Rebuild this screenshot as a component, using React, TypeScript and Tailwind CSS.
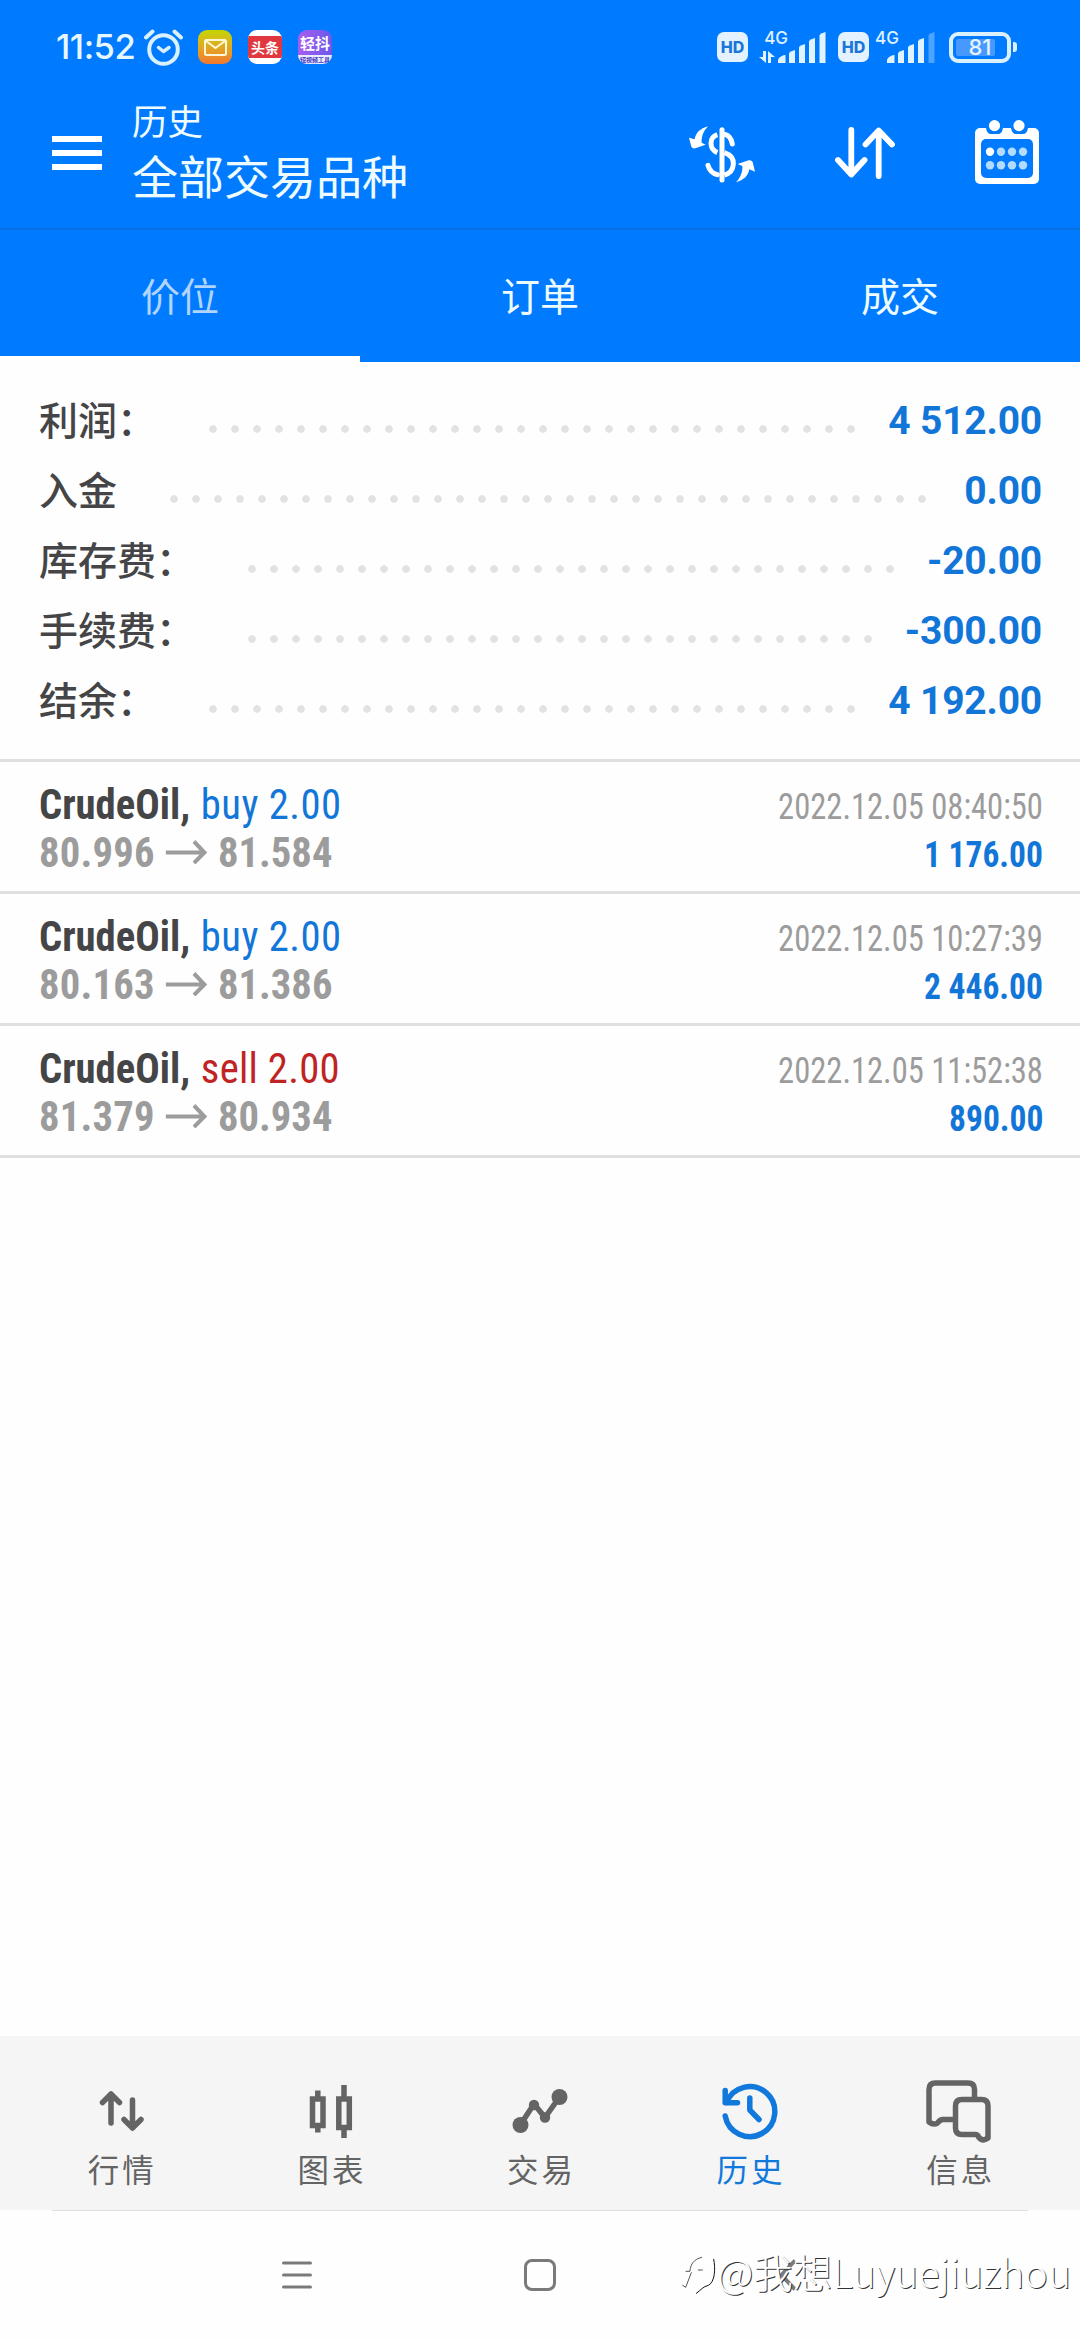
import type { ReactNode } from 'react'

interface SummaryRow {
  label: string
  value: string
  dots: number
}

interface Trade {
  side: 'buy' | 'sell'
  open: string
  close: string
  time: string
  profit: string
}

const summary: SummaryRow[] = [
  { label: '利润：', value: '4 512.00', dots: 30 },
  { label: '入金', value: '0.00', dots: 35 },
  { label: '库存费：', value: '-20.00', dots: 30 },
  { label: '手续费：', value: '-300.00', dots: 29 },
  { label: '结余：', value: '4 192.00', dots: 30 },
]

const trades: Trade[] = [
  { side: 'buy', open: '80.996', close: '81.584', time: '2022.12.05 08:40:50', profit: '1 176.00' },
  { side: 'buy', open: '80.163', close: '81.386', time: '2022.12.05 10:27:39', profit: '2 446.00' },
  { side: 'sell', open: '81.379', close: '80.934', time: '2022.12.05 11:52:38', profit: '890.00' },
]

const DOT_STEP = 22

function AlarmIcon() {
  return (
    <svg width="39" height="37" viewBox="0 0 39 37" fill="none" stroke="#d9f0ff" strokeLinecap="round">
      <circle cx="19.5" cy="20.5" r="14.3" strokeWidth="4" />
      <path d="M2 8.500L8.500 2.500M37 8.500L30.500 2.500" strokeWidth="4" />
      <path d="M14.500 18.500L19.500 22.500L25 18.500" strokeWidth="3.500" strokeLinejoin="round" />
    </svg>
  )
}

function HdBadge() {
  return (
    <div className="flex h-[30px] w-[31px] items-center justify-center rounded-[7px] bg-[#e4f2ff] text-[16px] font-extrabold leading-none text-[#1a76d8]">
      HD
    </div>
  )
}

function SignalBars({ weak }: { weak?: boolean }) {
  return (
    <svg width="48" height="31" viewBox="0 0 48 31" fill="#e0f3ff">
      <path d="M0 31v-3.500q3-4.500 7.500-4.500v8z" />
      <path d="M11 31v-10q2-2 6-3v13z" />
      <path d="M21 31v-16q2-2 6-3v19z" />
      <path d="M31 31v-22q2-2 6-3v25z" />
      <path d="M41.500 31v-28q2-2 6-3v31z" fill={weak ? '#4da3ff' : '#e0f3ff'} />
    </svg>
  )
}

function BatteryIcon() {
  return (
    <div className="flex items-center gap-[2px]">
      <div className="relative h-[31px] w-[62px] rounded-[9px] border-4 border-[#d9f0ff] p-[3px]">
        <div className="h-full w-[39px] rounded-[2px] bg-[#4799ff]" />
        <span className="absolute inset-0 flex items-center justify-center text-[22px] font-medium leading-none text-[#e4f5ff]">81</span>
      </div>
      <div className="h-[10px] w-1 rounded-r-[3px] bg-[#d9f0ff]" />
    </div>
  )
}

function StatusBar() {
  return (
    <div className="flex h-[94px] items-center pl-[56px] pr-[63px] font-['Inter',sans-serif]">
      <span className="w-[88px] whitespace-nowrap text-[34.5px] font-medium leading-none tracking-[-0.5px] text-[#e6f7ff]">11:52</span>
      <AlarmIcon />
      <div className="ml-[15px] flex size-[34px] items-center justify-center rounded-[9px] bg-linear-to-b from-[#c3d500] to-[#f2762c]">
        <svg width="23" height="17" viewBox="0 0 23 17" fill="none" stroke="#fff8d8" strokeWidth="2">
          <rect x="1" y="1" width="21" height="15" rx="1.500" />
          <path d="M2 2l9.500 7L21 2" />
        </svg>
      </div>
      <div className="ml-4 flex size-[34px] items-center overflow-hidden rounded-[9px] bg-white">
        <div className="flex h-[22px] w-full items-center justify-center whitespace-nowrap bg-[#e0383e] font-['Noto_Sans_CJK_SC',sans-serif] text-[14px] font-bold leading-none text-white">
          头条
        </div>
      </div>
      <div className="ml-4 flex size-[34px] flex-col items-center overflow-hidden rounded-[9px] bg-linear-to-r from-[#a95cf0] to-[#6a58ea] font-['Noto_Sans_CJK_SC',sans-serif] font-bold leading-none">
        <span className="flex h-[25px] items-center text-[15px] text-white">轻抖</span>
        <span className="flex h-[9px] w-full items-center justify-center whitespace-nowrap bg-[#e8ecff] text-[6px] text-[#4a3ac0]">短视频工具</span>
      </div>

      <div className="ml-auto flex items-center">
        <HdBadge />
        <div className="ml-[11px] flex h-[32px] w-[29px] flex-col justify-between">
          <span className="self-end text-[17px] font-medium leading-[14px] text-[#e0f3ff]">4G</span>
          <svg width="16" height="12" viewBox="0 0 16 12" fill="#e0f3ff">
            <path d="M4 0h3v12l-7-6h4zM9 12V0l7 6h-4v6z" />
          </svg>
        </div>
        <div className="-ml-[10px]">
          <SignalBars />
        </div>
        <div className="ml-3">
          <HdBadge />
        </div>
        <div className="ml-[6px] h-[32px] w-[21px]">
          <span className="block text-[17px] font-medium leading-[14px] text-[#e0f3ff]">4G</span>
        </div>
        <div className="-ml-[9px]">
          <SignalBars weak />
        </div>
        <div className="ml-[14px]">
          <BatteryIcon />
        </div>
      </div>
    </div>
  )
}

function CurrencyIcon() {
  return (
    <svg width="90" height="80" viewBox="0 0 270 240" fill="none" stroke="#fff" strokeWidth="15">
      <path d="M126 53V204" strokeLinecap="round" />
      <path d="M112 68Q93 74 93 94T112 122" />
      <path d="M133 67Q152 70 157 96" strokeLinecap="round" />
      <path d="M133 122Q162 132 160 157T133 189" />
      <path d="M84 160Q90 182 112 188" strokeLinecap="round" />
      <g fill="#fff" stroke="none">
        <path d="M84 43C60 50 48 62 44 82L27 77L34 104Q38 111 46 109L77 98L65 92C64 74 70 58 84 43z" />
        <path d="M168 211C192 204 204 192 208 172L225 179L218 150Q214 143 206 145L173 156L187 162C188 180 182 196 168 211z" />
      </g>
    </svg>
  )
}

function SortIcon() {
  return (
    <svg width="60" height="52" viewBox="0 0 60 52" fill="none" stroke="#fff" strokeWidth="5.800" strokeLinecap="round" strokeLinejoin="round">
      <path d="M16.300 3V46M3 33L16.300 47.500L29.500 33" />
      <path d="M43.700 49V5M30.500 17.500L43.700 3.500L57 17.500" />
    </svg>
  )
}

function CalendarIcon() {
  return (
    <svg width="64" height="64" viewBox="0 0 64 64" fill="#fff">
      <rect y="8" width="64" height="56" rx="5" />
      <rect x="6" y="19" width="52" height="39" rx="5" fill="#007bff" />
      <path d="M11 8h17q-1 6-5 6h-7q-4 0-5-6zM36 8h17q-1 6-5 6h-7q-4 0-5-6z" fill="#007bff" />
      <circle cx="19.500" cy="5.600" r="5.600" />
      <circle cx="44" cy="5.600" r="5.600" />
      <circle cx="15" cy="31.700" r="4.200" />
      <g fill="#b3daff">
        <circle cx="26" cy="31.700" r="4.200" />
        <circle cx="37" cy="31.700" r="4.200" />
        <circle cx="48" cy="31.700" r="4.200" />
        <circle cx="15" cy="45.300" r="4.200" />
        <circle cx="26" cy="45.300" r="4.200" />
        <circle cx="37" cy="45.300" r="4.200" />
        <circle cx="48" cy="45.300" r="4.200" />
      </g>
    </svg>
  )
}

function Header() {
  return (
    <header className="bg-[#007bff]">
      <StatusBar />
      <div className="flex h-[136px] items-start border-b-2 border-[#0871e4] pl-[52px] pr-[41px]">
        <div className="mt-[42px] flex w-[50px] flex-col gap-2">
          <div className="h-[6px] bg-white" />
          <div className="h-[6px] bg-white" />
          <div className="h-[6px] bg-white" />
        </div>
        <div className="ml-[30px] flex flex-col whitespace-nowrap text-[#effcff]">
          <span className="text-[35.5px] leading-[51px]">历史</span>
          <span className="text-[46px] leading-[59px]">全部交易品种</span>
        </div>
        <div className="ml-auto flex h-[116px] items-center">
          <CurrencyIcon />
          <div className="ml-[65px] pt-[2px]">
            <SortIcon />
          </div>
          <div className="ml-20">
            <CalendarIcon />
          </div>
        </div>
      </div>
      <div className="grid h-[132px] grid-cols-3 text-[39px] text-[#effcff]">
        <div className="flex items-center justify-center border-b-[6px] border-white pt-[2px] text-[#b0d4fa]">价位</div>
        <div className="flex items-center justify-center pb-1">订单</div>
        <div className="flex items-center justify-center pb-1">成交</div>
      </div>
    </header>
  )
}

function Summary() {
  return (
    <section className="h-[400px] border-b-[3px] border-[#e0e0e0] pl-[39px] pr-[38px] pt-6">
      {summary.map((row) => (
        <div key={row.label} className="flex h-[70px] items-center">
          <span className="-mt-[7px] text-[39px] font-medium leading-[60px] text-[#454547]">{row.label}</span>
          <div
            className="ml-[46px] mt-[15px] h-2 bg-[radial-gradient(circle_at_center,#e2e2e2_3.4px,transparent_4.2px)] bg-[length:22px_8px] bg-repeat-x"
            style={{ width: row.dots * DOT_STEP }}
          />
          <span className="ml-auto whitespace-nowrap font-['Roboto',sans-serif] text-[39px] font-bold leading-[60px] tracking-[-0.2px] text-[#1276d8]">{row.value}</span>
        </div>
      ))}
    </section>
  )
}

function TradeRow({ trade }: { trade: Trade }) {
  return (
    <div className="flex h-[132px] justify-between border-b-[3px] border-[#e0e0e0] pl-[39px] pr-[37px] font-['Roboto_Condensed',Roboto,sans-serif]">
      <div className="flex origin-left scale-x-[0.945] flex-col whitespace-nowrap pt-[18px] text-[43px] leading-[48px]">
        <div>
          <span className="mr-[1.5px] font-bold text-[#454547]">CrudeOil,</span>{' '}
          <span className={trade.side === 'buy' ? 'tracking-[0.5px] text-[#1276d8]' : 'tracking-[0.3px] text-[#c02323]'}>{trade.side} 2.00</span>
        </div>
        <div className="flex items-center font-bold text-[#9c9c9c]">
          <span className="tracking-[0.2px]">{trade.open}</span>
          <svg className="ml-[12px] mr-[10px]" width="45" height="24" viewBox="0 0 45 24" fill="none" stroke="#9c9c9c" strokeWidth="4.200">
            <path d="M0 12.500H41M30 1.500L41 12.500L30 23" />
          </svg>
          <span>{trade.close}</span>
        </div>
      </div>
      <div className="flex flex-col items-end whitespace-nowrap pt-[21px] text-[36px] leading-[48px]">
        <span className="origin-right scale-x-[0.904] text-[#9c9c9c]">{trade.time}</span>
        <span className="origin-right scale-x-[0.93] font-bold text-[#1276d8]">{trade.profit}</span>
      </div>
    </div>
  )
}

function NavItem({ label, active, children }: { label: string; active?: boolean; children: ReactNode }) {
  return (
    <div className={active ? 'flex flex-col items-center text-[#1279dc]' : 'flex flex-col items-center text-[#646464]'}>
      <svg className="mt-[38px]" width="76" height="72" viewBox="0 0 76 72" fill="none" stroke="currentColor" strokeWidth="5.500" strokeLinecap="round" strokeLinejoin="round">
        {children}
      </svg>
      <span className="pl-[3px] text-[31.5px] leading-[44px] tracking-[3px]">{label}</span>
    </div>
  )
}

function BottomNav() {
  return (
    <nav className="grid h-[174px] grid-cols-5 bg-[#f5f5f5] px-4">
      <NavItem label="行情">
        <path d="M28 49V21M19.500 28.500L28 20L36.500 28.500" />
        <path d="M49.500 26V53M41 45.500L49.500 54L58 45.500" />
      </NavItem>
      <NavItem label="图表">
        <g strokeLinecap="butt" strokeLinejoin="miter">
          <rect x="20.500" y="25" width="10.500" height="26.500" />
          <path d="M25.800 16.500V25M25.800 51V58.500" />
          <rect x="46.800" y="25" width="10.500" height="28.500" />
          <path d="M52 11V25M52 53V64" />
        </g>
      </NavItem>
      <NavItem label="交易">
        <path d="M18.500 50.500L32 30L43 43.500L57.500 23" />
        <circle cx="18.500" cy="51" r="8" fill="currentColor" stroke="none" />
        <circle cx="32" cy="31" r="5.200" fill="currentColor" stroke="none" />
        <circle cx="43" cy="43.500" r="5.200" fill="currentColor" stroke="none" />
        <circle cx="57.500" cy="23" r="8" fill="currentColor" stroke="none" />
      </NavItem>
      <NavItem label="历史" active>
        <path d="M13.200 42A25 25 0 1 0 14.500 28.500" />
        <path d="M13.200 16.500V28.800H25.500" />
        <path d="M37.800 24V36L47 45.500" />
      </NavItem>
      <NavItem label="信息">
        <path d="M31 45.500H21.500Q18.500 46 16 49.500Q12 51 8 48V15.500Q8 9 14.500 9H47Q53.500 9 53.500 15.500V24" />
        <path d="M41 25.500H60.500Q67 25.500 67 32V64Q61.500 68 57.500 63Q57 60.500 54 60.500H41Q34.500 60.500 34.500 54V32Q34.500 25.500 41 25.500z" />
      </NavItem>
    </nav>
  )
}

function SystemBar() {
  return (
    <div className="relative h-[130px] bg-[#fefefe]">
      <div className="mx-[52px] h-px bg-[#dedede]" />
      <div className="flex h-[128px] items-center pl-[282px]">
        <svg width="30" height="30" viewBox="0 0 30 30" stroke="#7a7a7a" strokeWidth="3.200" strokeLinecap="round">
          <path d="M1.600 3H28.400M1.600 15H28.400M1.600 27H28.400" />
        </svg>
        <div className="ml-[212px] size-8 rounded-[8px] border-[3.5px] border-[#7a7a7a]" />
        <svg className="ml-[223px]" width="18" height="32" viewBox="0 0 18 32" fill="none" stroke="#7a7a7a" strokeWidth="4">
          <path d="M16 1.500L2.500 16L16 30.500" />
        </svg>
      </div>

      {/* watermark over the system buttons */}
      <div className="absolute right-[9px] top-[33px] flex items-center">
        <svg className="mt-1" width="36" height="46" viewBox="0 0 108 138" fill="none" strokeLinecap="round">
          <path d="M14 60H28Q32 24 66 22Q94 22 94 50V84Q92 102 74 104Q64 106 48 126M28 62L10 106" stroke="#fff" strokeWidth="9" />
          <path d="M98 28C104 56 102 96 82 106C66 110 62 118 46 130" stroke="#111" strokeWidth="3" />
          <path d="M15 64H26M27 62C29 42 38 28 62 22M52 60H64" stroke="#333" strokeWidth="2.500" />
          <path d="M5 106L14 112L31 68" stroke="#333" strokeWidth="2.500" />
        </svg>
        <span className="whitespace-nowrap text-[39.5px] font-light leading-[56px] text-white [text-shadow:1px_1px_0.5px_#333]">@我想Luyuejiuzhou</span>
      </div>
    </div>
  )
}

export default function App() {
  return (
    <div className="flex h-[2340px] w-[1080px] flex-col overflow-hidden bg-[#fefefe] font-['Noto_Sans_CJK_SC',sans-serif]">
      <Header />
      <Summary />
      {trades.map((trade) => (
        <TradeRow key={trade.time} trade={trade} />
      ))}
      <main className="flex-1" />
      <BottomNav />
      <SystemBar />
    </div>
  )
}
